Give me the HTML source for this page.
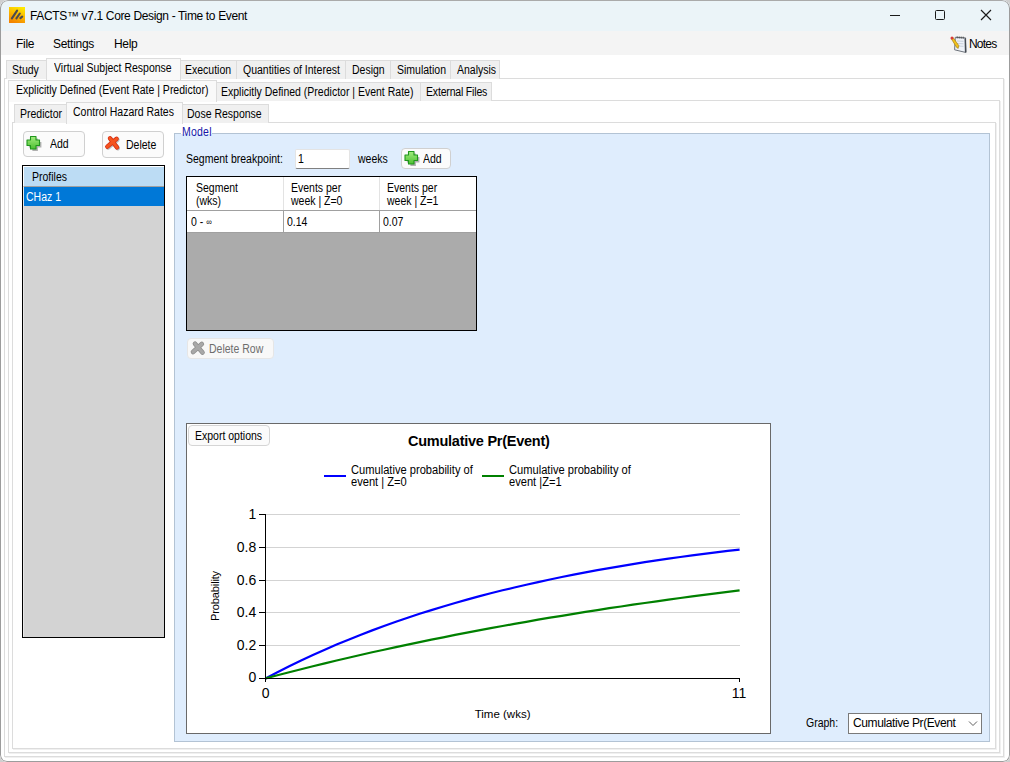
<!DOCTYPE html>
<html><head><meta charset="utf-8">
<style>
*{box-sizing:border-box;margin:0;padding:0}
html,body{width:1010px;height:762px;overflow:hidden;background:#cfcfcf;font-family:"Liberation Sans",sans-serif;font-size:11px;color:#000}
.a{position:absolute}
.u{position:absolute;white-space:nowrap;line-height:14px;font-size:12px}
.t{position:absolute;white-space:nowrap;line-height:13px;font-size:12px;letter-spacing:0;transform:scaleX(0.875);transform-origin:0 0}
#win{position:absolute;left:0;top:0;width:1010px;height:762px;background:#fff;overflow:hidden;border-radius:8px 8px 7px 7px}
#frame{position:absolute;left:0;top:0;width:1010px;height:762px;border:1px solid #9c9c9c;border-top-color:#aaaaaa;border-radius:8px 8px 7px 7px}
#title{position:absolute;left:0;top:0;width:1010px;height:31px;background:#ebf4f8}
#menu{position:absolute;left:0;top:31px;width:1010px;height:24px;background:#f4f4f4}
.page{position:absolute;border:1px solid #dcdcdc;background:#fff;box-shadow:1px 1px 0 #f0f0f0}
.tab{position:absolute;background:#f0f0f0;border:1px solid #dcdcdc;border-bottom:none}
.tabsel{position:absolute;background:#f9f9f9;border:1px solid #dcdcdc;border-bottom:none}
.btn{position:absolute;background:#fbfbfb;border:1px solid #d0d0d0;border-radius:4px}
</style></head><body>
<div id="win">
 <div id="title">
  <svg class="a" style="left:9px;top:7px" width="16" height="16" viewBox="0 0 16 16">
   <defs><linearGradient id="g1" x1="0.75" y1="0" x2="0.35" y2="1"><stop offset="0" stop-color="#ffea00"/><stop offset="1" stop-color="#f48400"/></linearGradient></defs>
   <rect x="0" y="0" width="16" height="16" fill="url(#g1)"/>
   <path d="M2.9 11.3 L8.1 3.7 M7.4 11.3 L10.8 6.5 M11.4 11.1 L13.2 9.6" stroke="#4c4c50" stroke-width="2.1" stroke-linecap="round"/>
  </svg>
  <div class="u" style="left:30px;top:9px;letter-spacing:-0.35px">FACTS™ v7.1 Core Design - Time to Event</div>
  <!-- window controls -->
  <div class="a" style="left:890px;top:14.6px;width:10px;height:1.2px;background:#1a1a1a"></div>
  <div class="a" style="left:935px;top:10px;width:10px;height:10px;border:1.2px solid #1a1a1a;border-radius:1.5px"></div>
  <svg class="a" style="left:980px;top:9px" width="12" height="12" viewBox="0 0 12 12"><path d="M1 1 L11 11 M11 1 L1 11" stroke="#1a1a1a" stroke-width="1.15"/></svg>
 </div>
 <div id="menu">
  <div class="u" style="left:16px;top:6px;letter-spacing:-0.3px">File</div>
  <div class="u" style="left:53px;top:6px;letter-spacing:-0.3px">Settings</div>
  <div class="u" style="left:114px;top:6px;letter-spacing:-0.3px">Help</div>
  <svg class="a" style="left:945px;top:1px" width="25" height="22" viewBox="0 0 25 22">
   <path d="M10.3 5.3 L20.6 5.9 L21 20.5 L9.6 17.8 Z" fill="#eef2f8" stroke="#6c727a" stroke-width="1"/>
   <path d="M20.2 6.2 L20.6 20.2" stroke="#444a52" stroke-width="1.4"/>
   <path d="M12 9 L18.5 9.3 M12 11.5 L18.5 11.8 M12 14 L18.5 14.3" stroke="#c4ccd8" stroke-width="0.9"/>
   <path d="M12.2 4.4 V6.4 M14.2 4.5 V6.5 M16.2 4.6 V6.6 M18.2 4.7 V6.7" stroke="#4a4a4a" stroke-width="1"/>
   <path d="M6.3 6.8 L8 5.4 L13.8 13.6 L13.2 16.4 L11.6 15.4 Z" fill="#f1c21b" stroke="#9a7510" stroke-width="0.6" stroke-linejoin="round"/>
   <circle cx="7" cy="5.9" r="1.5" fill="#d83a3a"/>
  </svg>
  <div class="u" style="left:969px;top:6px;letter-spacing:-0.8px">Notes</div>
 </div>

 <!-- Tab control level 1 -->
 <div class="page" style="left:4px;top:78px;width:1000px;height:679px"></div>
 <div class="tab" style="left:6px;top:60px;width:41px;height:19px"></div>
 <div class="t" style="left:12px;top:64px">Study</div>
 <div class="tab" style="left:180px;top:60px;width:57px;height:19px"></div>
 <div class="t" style="left:185px;top:64px">Execution</div>
 <div class="tab" style="left:236px;top:60px;width:110px;height:19px"></div>
 <div class="t" style="left:243px;top:64px">Quantities of Interest</div>
 <div class="tab" style="left:345px;top:60px;width:46px;height:19px"></div>
 <div class="t" style="left:352px;top:64px">Design</div>
 <div class="tab" style="left:390px;top:60px;width:61px;height:19px"></div>
 <div class="t" style="left:397px;top:64px">Simulation</div>
 <div class="tab" style="left:450px;top:60px;width:50px;height:19px"></div>
 <div class="t" style="left:457px;top:64px">Analysis</div>
 <div class="tabsel" style="left:46px;top:58px;width:135px;height:22px"></div>
 <div class="t" style="left:54px;top:62px">Virtual Subject Response</div>

 <!-- level 2 -->
 <div class="page" style="left:8px;top:100px;width:992px;height:653px"></div>
 <div class="tab" style="left:215px;top:82px;width:206px;height:19px"></div>
 <div class="t" style="left:221px;top:86px">Explicitly Defined (Predictor | Event Rate)</div>
 <div class="tab" style="left:420px;top:82px;width:72px;height:19px"></div>
 <div class="t" style="left:426px;top:86px;letter-spacing:-0.2px">External Files</div>
 <div class="tabsel" style="left:8px;top:80px;width:209px;height:22px"></div>
 <div class="t" style="left:16px;top:84px">Explicitly Defined (Event Rate | Predictor)</div>

 <!-- level 3 -->
 <div class="page" style="left:12px;top:122px;width:984px;height:627px"></div>
 <div class="tab" style="left:14px;top:104px;width:53px;height:19px"></div>
 <div class="t" style="left:20px;top:108px">Predictor</div>
 <div class="tab" style="left:181px;top:104px;width:88px;height:19px"></div>
 <div class="t" style="left:187px;top:108px">Dose Response</div>
 <div class="tabsel" style="left:66px;top:102px;width:117px;height:22px"></div>
 <div class="t" style="left:73px;top:106px">Control Hazard Rates</div>

 <!-- left panel -->
 <div class="btn" style="left:23px;top:131px;width:62px;height:26px"></div>
 <svg class="a" style="left:25px;top:135px" width="17" height="17" viewBox="0 0 17 17">
  <defs><linearGradient id="gp" x1="0" y1="0" x2="0" y2="1"><stop offset="0" stop-color="#a4ec80"/><stop offset="1" stop-color="#4cc030"/></linearGradient></defs>
  <path d="M6.5 2.5 H12 V6 H15.5 V11.5 H12 V15 H6.5 V11.5 H3 V6 H6.5 Z" fill="#555" opacity="0.45" transform="translate(0.9,0.9)"/>
  <path d="M5.5 1.5 H11 V5 H14.5 V10.5 H11 V14 H5.5 V10.5 H2 V5 H5.5 Z" fill="url(#gp)" stroke="#1f961c" stroke-width="1.1" stroke-linejoin="round"/>
 </svg>
 <div class="t" style="left:50px;top:138px">Add</div>
 <div class="btn" style="left:102px;top:131px;width:62px;height:27px"></div>
 <svg class="a" style="left:102px;top:134px" width="20" height="18" viewBox="0 0 20 18">
  <g stroke-linecap="round">
   <path d="M8 4.3 L15 13.3 M14.6 4.8 L5.3 12.6" stroke="#444" stroke-opacity="0.35" stroke-width="4.4" transform="translate(0.8,0.9)"/>
   <path d="M8 4.3 L15 13.3 M14.6 4.8 L5.3 12.6" stroke="#d52c12" stroke-width="4.4"/>
   <path d="M8 4.3 L15 13.3 M14.6 4.8 L5.3 12.6" stroke="#f5541f" stroke-width="3"/>
  </g>
 </svg>
 <div class="t" style="left:126px;top:139px">Delete</div>

 <div class="a" style="left:22px;top:165px;width:143px;height:473px;border:1px solid #000;background:#d3d3d3"></div>
 <div class="a" style="left:23px;top:166px;width:141px;height:21px;background:#bcdcf4;border-top:1px solid #fff;border-left:1px solid #fff;border-bottom:1px solid #a0a0a0"></div>
 <div class="a" style="left:23px;top:187px;width:1px;height:450px;background:#e8e8e8"></div>
 <div class="t" style="left:32px;top:171px">Profiles</div>
 <div class="a" style="left:24px;top:187px;width:140px;height:19px;background:#0078d7"></div>
 <div class="t" style="left:26px;top:191px;color:#fff">CHaz 1</div>

 <!-- Model group -->
 <div class="a" style="left:174px;top:133px;width:816px;height:609px;border:1px solid #b3c3d4;background:#dfedfd"></div>
 <div class="a" style="left:181px;top:126px;width:31px;height:10px;background:#fff"></div>
 <div class="a" style="left:181px;top:134px;width:31px;height:2px;background:#dfedfd"></div>
 <div class="t" style="left:182px;top:126px;color:#1414a8;letter-spacing:0.25px">Model</div>

 <div class="t" style="left:186px;top:153px">Segment breakpoint:</div>
 <div class="a" style="left:295px;top:149px;width:55px;height:20px;background:#fff;border:1px solid #e4e4e4;border-bottom:1px solid #808080;border-radius:2px"></div>
 <div class="t" style="left:298px;top:153px">1</div>
 <div class="t" style="left:358px;top:153px">weeks</div>
 <div class="btn" style="left:401px;top:148px;width:50px;height:21px"></div>
 <svg class="a" style="left:403px;top:150px" width="17" height="17" viewBox="0 0 17 17">
  <path d="M6.5 2.5 H12 V6 H15.5 V11.5 H12 V15 H6.5 V11.5 H3 V6 H6.5 Z" fill="#555" opacity="0.45" transform="translate(0.9,0.9)"/>
  <path d="M5.5 1.5 H11 V5 H14.5 V10.5 H11 V14 H5.5 V10.5 H2 V5 H5.5 Z" fill="url(#gp)" stroke="#1f961c" stroke-width="1.1" stroke-linejoin="round"/>
 </svg>
 <div class="t" style="left:423px;top:153px">Add</div>

 <!-- grid -->
 <div class="a" style="left:186px;top:176px;width:291px;height:155px;border:1px solid #000;background:#ababab"></div>
 <div class="a" style="left:187px;top:177px;width:289px;height:34px;background:#fff;border-bottom:1px solid #a0a0a0"></div>
 <div class="a" style="left:187px;top:211px;width:289px;height:22px;background:#fff;border-bottom:1px solid #a0a0a0"></div>
 <div class="a" style="left:283px;top:177px;width:1px;height:33px;background:#e3e3e3"></div>
 <div class="a" style="left:379px;top:177px;width:1px;height:33px;background:#e3e3e3"></div>
 <div class="a" style="left:283px;top:211px;width:1px;height:21px;background:#a0a0a0"></div>
 <div class="a" style="left:379px;top:211px;width:1px;height:21px;background:#a0a0a0"></div>
 <div class="t" style="left:196px;top:182px;line-height:12.5px">Segment<br>(wks)</div>
 <div class="t" style="left:291px;top:182px;line-height:12.5px">Events per<br>week | Z=0</div>
 <div class="t" style="left:387px;top:182px;line-height:12.5px">Events per<br>week | Z=1</div>
 <div class="t" style="left:191px;top:216px">0 - <span style="font-size:9px;position:relative;top:-1px">∞</span></div>
 <div class="t" style="left:287px;top:216px">0.14</div>
 <div class="t" style="left:383px;top:216px">0.07</div>

 <div class="btn" style="left:187px;top:338px;width:87px;height:21px;border-color:#e6e6e6;background:#f8f8f8"></div>
 <svg class="a" style="left:187px;top:338px" width="20" height="20" viewBox="0 0 20 20">
  <g stroke-linecap="round">
   <path d="M8 5.8 L15.5 14.5 M14.8 6 L6 14" stroke="#8c8c8c" stroke-width="4.6"/>
   <path d="M8 5.8 L15.5 14.5 M14.8 6 L6 14" stroke="#a8a8a8" stroke-width="3.2"/>
  </g>
 </svg>
 <div class="t" style="left:209px;top:343px;color:#6d6d6d">Delete Row</div>

 <!-- chart -->
 <div class="a" style="left:186px;top:423px;width:585px;height:311px;border:1px solid #696969;background:#fff"></div>
 <div class="btn" style="left:188px;top:425px;width:82px;height:21px;border-color:#d5d5d5"></div>
 <div class="t" style="left:195px;top:430px">Export options</div>
 <svg class="a" style="left:0;top:0" width="1010" height="762" viewBox="0 0 1010 762">
  <text x="478.8" y="446" font-family="Liberation Sans" font-size="14.5" font-weight="bold" text-anchor="middle" letter-spacing="-0.25">Cumulative Pr(Event)</text>
  <line x1="324" y1="476" x2="346" y2="476" stroke="#0000ff" stroke-width="2"/>
  <line x1="482" y1="476" x2="504" y2="476" stroke="#008000" stroke-width="2"/>
  
  <g stroke="#d3d3d3" stroke-width="1">
   <line x1="266" y1="514.5" x2="740" y2="514.5"/>
   <line x1="266" y1="547.5" x2="740" y2="547.5"/>
   <line x1="266" y1="580.5" x2="740" y2="580.5"/>
   <line x1="266" y1="612.5" x2="740" y2="612.5"/>
   <line x1="266" y1="645.5" x2="740" y2="645.5"/>
  </g>
  
  <g font-family="Liberation Sans" font-size="14" text-anchor="end">
   <text x="256.3" y="519">1</text>
   <text x="256.3" y="552">0.8</text>
   <text x="256.3" y="585">0.6</text>
   <text x="256.3" y="617">0.4</text>
   <text x="256.3" y="650">0.2</text>
   <text x="256.3" y="682">0</text>
  </g>
  <g font-family="Liberation Sans" font-size="14" text-anchor="middle">
   <text x="265.7" y="698">0</text>
   <text x="739" y="698">11</text>
  </g>
  <text x="502.6" y="718" font-family="Liberation Sans" font-size="11.5" text-anchor="middle">Time (wks)</text>
  <text transform="translate(219,596) rotate(-90)" font-family="Liberation Sans" font-size="11.2" text-anchor="middle" letter-spacing="-0.2">Probability</text>
  <path d="M265.5 678.4L277.4 672.2L289.2 666.2L301.1 660.5L312.9 655.0L324.8 649.7L336.6 644.6L348.5 639.7L360.3 634.9L372.2 630.4L384.0 626.0L395.9 621.8L407.7 617.7L419.6 613.8L431.4 610.1L443.3 606.5L455.1 603.0L467.0 599.6L478.8 596.4L490.7 593.3L502.6 590.3L514.4 587.5L526.3 584.7L538.1 582.1L550.0 579.5L561.8 577.0L573.7 574.7L585.5 572.4L597.4 570.2L609.2 568.1L621.1 566.1L632.9 564.1L644.8 562.2L656.6 560.4L668.5 558.7L680.3 557.0L692.2 555.4L704.0 553.9L715.9 552.4L727.7 550.9L739.6 549.6" fill="none" stroke="#0000ff" stroke-width="2.2"/>
  <path d="M265.5 678.4L277.4 675.3L289.2 672.2L301.1 669.2L312.9 666.2L324.8 663.4L336.6 660.5L348.5 657.7L360.3 655.0L372.2 652.3L384.0 649.7L395.9 647.1L407.7 644.6L419.6 642.1L431.4 639.7L443.3 637.3L455.1 634.9L467.0 632.6L478.8 630.4L490.7 628.2L502.6 626.0L514.4 623.9L526.3 621.8L538.1 619.7L550.0 617.7L561.8 615.8L573.7 613.8L585.5 611.9L597.4 610.1L609.2 608.2L621.1 606.5L632.9 604.7L644.8 603.0L656.6 601.3L668.5 599.6L680.3 598.0L692.2 596.4L704.0 594.8L715.9 593.3L727.7 591.8L739.6 590.3" fill="none" stroke="#008000" stroke-width="2.2"/>
  <g stroke="#000" stroke-width="1" shape-rendering="crispEdges">
   <line x1="265.5" y1="514" x2="265.5" y2="682"/>
   <line x1="259" y1="678.5" x2="740" y2="678.5"/>
   <line x1="739.5" y1="678" x2="739.5" y2="682"/>
   <line x1="259" y1="514.5" x2="266" y2="514.5"/>
   <line x1="259" y1="547.5" x2="266" y2="547.5"/>
   <line x1="259" y1="580.5" x2="266" y2="580.5"/>
   <line x1="259" y1="612.5" x2="266" y2="612.5"/>
   <line x1="259" y1="645.5" x2="266" y2="645.5"/>
  </g>
 </svg>

<div class="t" style="left:351px;top:463.7px;font-size:12.5px;line-height:12.6px;transform:scaleX(0.89)">Cumulative probability of<br>event | Z=0</div>
 <div class="t" style="left:509px;top:463.7px;font-size:12.5px;line-height:12.6px;transform:scaleX(0.89)">Cumulative probability of<br>event |Z=1</div>
 <div class="t" style="left:806px;top:717px">Graph:</div>
 <div class="a" style="left:848px;top:713px;width:134px;height:21px;background:#fff;border:1px solid #7a7a7a"></div>
 <div class="u" style="left:853px;top:716px;letter-spacing:-0.4px">Cumulative Pr(Event</div>
 <svg class="a" style="left:968px;top:719px" width="11" height="10" viewBox="0 0 11 10"><path d="M1 2.5 L5 6.5 L9 2.5" fill="none" stroke="#606060" stroke-width="1"/></svg>
<div id="frame"></div>
</div>
</body></html>
